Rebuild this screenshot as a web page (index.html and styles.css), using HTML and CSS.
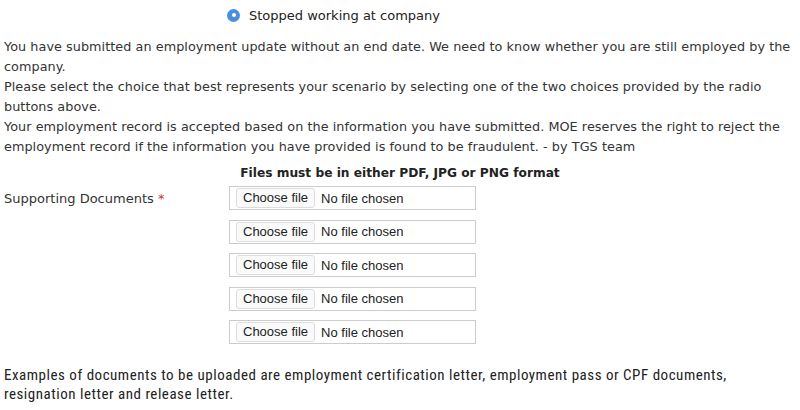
FILE: index.html
```html
<!DOCTYPE html>
<html>
<head>
<meta charset="utf-8">
<link rel="stylesheet" href="styles.css">
</head>
<body>
<div class="page">
  <div class="radio-row">
    <span class="radio"><span class="dot"></span></span>
    <span class="radio-label">Stopped working at company</span>
  </div>
  <div class="notice">
    <p>You have submitted an employment update without an end date. We need to know whether you are still employed by the company.</p>
    <p>Please select the choice that best represents your scenario by selecting one of the two choices provided by the radio buttons above.</p>
    <p>Your employment record is accepted based on the information you have submitted. MOE reserves the right to reject the employment record if the information you have provided is found to be fraudulent. - by TGS team</p>
  </div>
  <div class="format">Files must be in either PDF, JPG or PNG format</div>
  <div class="upload">
    <div class="label">Supporting Documents <span class="req">*</span></div>
    <div class="files">
      <div class="file"><span class="btn">Choose file</span><span class="none">No file chosen</span></div>
      <div class="file"><span class="btn">Choose file</span><span class="none">No file chosen</span></div>
      <div class="file"><span class="btn">Choose file</span><span class="none">No file chosen</span></div>
      <div class="file"><span class="btn">Choose file</span><span class="none">No file chosen</span></div>
      <div class="file"><span class="btn">Choose file</span><span class="none">No file chosen</span></div>
    </div>
  </div>
  <p class="examples">Examples of documents to be uploaded are employment certification letter, employment pass or CPF documents, resignation letter and release letter.</p>
</div>
</body>
</html>
```
FILE: styles.css
```css
html, body { margin: 0; padding: 0; background: #fff; }
body { font-family: "DejaVu Sans", Verdana, sans-serif; color: #333; font-size: 12.8px; }
.page { padding: 0 4px; width: 796px; box-sizing: border-box; }
.radio-row { display: flex; align-items: center; height: 30px; padding-left: 223px; }
.radio { width: 13px; height: 13px; border-radius: 50%; background: #4a8fdc; display: flex; align-items: center; justify-content: center; margin-right: 9px; }
.dot { width: 4px; height: 4px; border-radius: 50%; background: #fff; }
.radio-label { font-size: 13px; color: #222; }
.notice { margin-top: 7px; }
.notice p { margin: 0; line-height: 20px; letter-spacing: 0.05px; }
.format { text-align: center; font-weight: bold; font-size: 12.2px; margin-top: 7px; line-height: 18px; color: #222; padding-left: 4px; }
.upload { display: flex; margin-top: 4px; }
.label { width: 225px; padding-top: 5px; font-size: 13px; }
.req { color: #c33; }
.files { display: flex; flex-direction: column; gap: 9.6px; }
.file { width: 247px; height: 24px; box-sizing: border-box; border: 1px solid #ccc; display: flex; align-items: center; padding-left: 6px; font-family: "Liberation Sans", Arial, sans-serif; font-size: 13px; color: #222; }
.btn { border: 1px solid #ddd; border-radius: 3px; background: #fafafa; padding: 1px 6px; height: 16px; line-height: 16px; margin-right: 6px; }
.examples { font-family: "Liberation Sans Narrow", "Roboto Condensed", "Liberation Sans", sans-serif; font-size: 15px; letter-spacing: 0.52px; line-height: 19px; margin: 22px 0 0; color: #222; }
```
